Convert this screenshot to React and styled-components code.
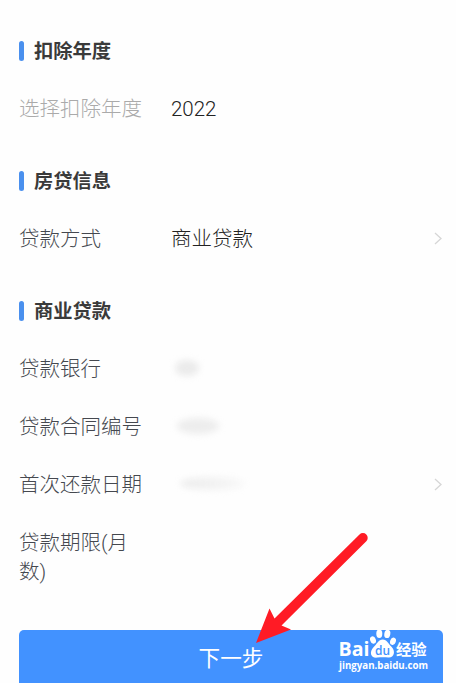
import React from "react";
import styled, { createGlobalStyle } from "styled-components";

const GlobalStyle = createGlobalStyle`
  * {
    box-sizing: border-box;
  }

  body {
    margin: 0;
    background: #fefefe;
    font-family: Roboto, "Noto Sans CJK SC", sans-serif;
    overflow: hidden;
  }
`

const Page = styled.main`
  position: relative;
  width: 456px;
  height: 683px;
  padding: 8px 13px 0 19px;
  overflow: hidden;
`

const SectionTitle = styled.h2`
  display: flex;
  align-items: center;
  gap: 10px;
  height: 72px;
  margin: 0;
  padding-top: 16px;
  font-size: 19.3px;
  font-weight: 700;
  line-height: 28px;
  color: #3a3a3a;

  &::before {
    content: "";
    width: 5px;
    height: 20px;
    margin-top: -2px;
    border-radius: 2.5px;
    background: #4a90ee;
  }
`

const Row = styled.div`
  display: flex;
  align-items: flex-start;
  min-height: 58px;
  padding: 14.5px 0;
  font-size: 20.5px;
  line-height: 29px;
`

const Label = styled.div`
  flex: none;
  width: 126px;
  margin-right: 26px;
  font-weight: 300;
  color: ${props => (props.$muted ? "#aaa" : "#45484f")};
`

const Value = styled.div`
  flex: 1;
  display: flex;
  align-items: center;
  height: 29px;
  font-weight: ${props => props.$weight || 300};
  color: #222;
`

const Smudge = styled.span`
  width: ${props => props.$width}px;
  height: ${props => props.$height}px;
  margin-top: -3px;
  margin-left: ${props => props.$left}px;
  border-radius: 50%;
  background: ${props => props.$fill};
  filter: blur(3px);
`

const Chevron = styled.svg`
  flex: none;
  width: 10px;
  height: 29px;
  margin-top: -1px;
  fill: none;
  stroke: #d6d6d6;
  stroke-width: 1.3;
`

const NextButton = styled.button`
  display: block;
  width: 424px;
  height: 58px;
  margin-top: 29px;
  padding: 0;
  border: 0;
  border-radius: 5px 5px 0 0;
  background: #4292ff;
  color: #fff;
  font-family: inherit;
  font-size: 21.6px;
  font-weight: 400;
  line-height: 58px;
`

const Arrow = styled.svg`
  position: absolute;
  left: 250px;
  top: 530px;
  fill: #ff1b25;
`

const Watermark = styled.svg`
  position: absolute;
  left: 334px;
  top: 624px;
  fill: #fff;
`

const ArrowIcon = () => (
  <Chevron viewBox="0 0 10 29">
    <path d="M2 9 L8 14.5 L2 20" />
  </Chevron>
)

const sections = [
  {
    title: "扣除年度",
    rows: [{ label: "选择扣除年度", muted: true, value: "2022", weight: 350 }]
  },
  {
    title: "房贷信息",
    rows: [{ label: "贷款方式", value: "商业贷款", link: true }]
  },
  {
    title: "商业贷款",
    rows: [
      { label: "贷款银行", smudge: { $left: 4, $width: 24, $height: 16, $fill: "#ebebeb" } },
      { label: "贷款合同编号", smudge: { $left: 6, $width: 42, $height: 16, $fill: "#ededed" } },
      {
        label: "首次还款日期",
        smudge: { $left: 9, $width: 65, $height: 13, $fill: "linear-gradient(90deg, #ececec, #f8f8f8)" },
        link: true
      },
      { label: "贷款期限(月数)" }
    ]
  }
]

export default function App() {
  return (
    <Page>
      <GlobalStyle />
      {sections.map(section => (
        <section key={section.title}>
          <SectionTitle>{section.title}</SectionTitle>
          {section.rows.map(row => (
            <Row key={row.label}>
              <Label $muted={row.muted}>{row.label}</Label>
              <Value $weight={row.weight}>
                {row.value}
                {row.smudge && <Smudge {...row.smudge} />}
              </Value>
              {row.link && <ArrowIcon />}
            </Row>
          ))}
        </section>
      ))}
      <NextButton type="button">下一步</NextButton>

      <Watermark width="100" height="58" viewBox="0 0 100 58">
        <text x="4.5" y="32.3" fontFamily="Open Sans, sans-serif" fontSize="19.5" fontWeight="700" textLength="31" lengthAdjust="spacingAndGlyphs">Bai</text>
        {/* paw */}
        <ellipse cx="39" cy="16" rx="2.8" ry="3.8" transform="rotate(-20 39 16)" />
        <ellipse cx="45.3" cy="9.7" rx="3" ry="4.2" />
        <ellipse cx="53.3" cy="9.9" rx="3" ry="4.2" transform="rotate(10 53.3 9.9)" />
        <ellipse cx="59" cy="17.3" rx="2.8" ry="3.8" transform="rotate(20 59 17.3)" />
        <path d="M48.8 15.5 C53 15.5 54 19.5 57.5 22.8 C62 27.5 60 34 54.5 33.6 C51 33 47 33 43.5 33.6 C36.5 34.5 35 28 39.5 23.2 C43 20 44.5 15.5 48.8 15.5 Z" />
        <text x="41" y="31" fill="#4292ff" fontFamily="Open Sans, sans-serif" fontSize="13" fontWeight="600" textLength="15" lengthAdjust="spacingAndGlyphs">du</text>
        <text x="62" y="31.3" fontFamily="Noto Sans CJK SC, sans-serif" fontSize="15.3" fontWeight="700">经验</text>
        <text x="5" y="44.6" fontFamily="Open Sans, sans-serif" fontSize="11.3" fontWeight="700" textLength="89" lengthAdjust="spacingAndGlyphs">jingyan.baidu.com</text>
      </Watermark>

      <Arrow width="125" height="120" viewBox="0 0 125 120">
        <path d="M6 113 L19.5 78.5 L24.5 88.5 L109.5 4.5 A4.7 4.7 0 0 1 116.3 11.3 L31.5 95.5 L41 99.5 Z" />
      </Arrow>
    </Page>
  )
}
